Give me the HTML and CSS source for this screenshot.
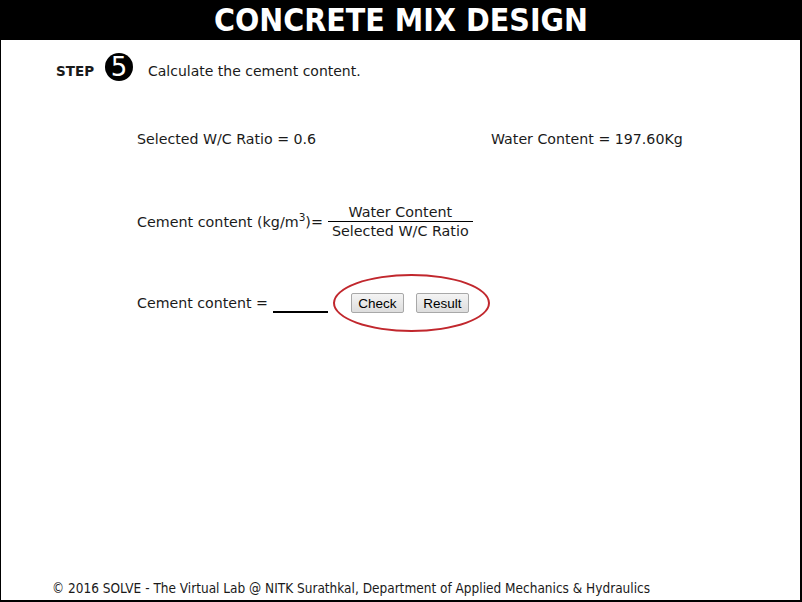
FILE: index.html
```html
<!DOCTYPE html>
<html>
<head>
<meta charset="utf-8">
<link rel="stylesheet" href="styles.css">
</head>
<body>
<div class="frame">
  <header class="title">CONCRETE MIX DESIGN</header>
  <main class="content">
    <div class="step">
      <span class="step-label">STEP</span>
      <span class="step-num">5</span>
      <span class="step-text">Calculate the cement content.</span>
    </div>
    <div class="given">
      <span class="ratio">Selected W/C Ratio = 0.6</span>
      <span class="water">Water Content = 197.60Kg</span>
    </div>
    <div class="formula">
      <span>Cement content (kg/m<sup>3</sup>)=</span>
      <span class="frac">
        <span class="num">Water Content</span>
        <span class="den">Selected W/C Ratio</span>
      </span>
    </div>
    <div class="answer">
      <span>Cement content =</span>
      <span class="blank"></span>
      <span class="btns">
        <button class="btn">Check</button>
        <button class="btn">Result</button>
      </span>
    </div>
  </main>
  <footer class="footer">© 2016 SOLVE - The Virtual Lab @ NITK Surathkal, Department of Applied Mechanics &amp; Hydraulics</footer>
</div>
</body>
</html>
```
FILE: styles.css
```css
html, body { margin: 0; padding: 0; background: #fff; }
body { width: 802px; height: 602px; overflow: hidden; }
.frame {
  box-sizing: border-box;
  width: 802px; height: 602px;
  border-left: 1px solid #000;
  border-right: 2px solid #000;
  border-bottom: 2px solid #000;
  display: flex; flex-direction: column;
  font-family: "DejaVu Sans", Verdana, sans-serif;
  color: #1a1a1a;
}
.title {
  background: #000; color: #fff;
  height: 40px; margin: 0 -2px 0 -1px;
  font-family: "DejaVu Sans Condensed", "DejaVu Sans", sans-serif;
  font-weight: bold; font-size: 31.8px; line-height: 40px;
  text-align: center;
}
.content { flex: 1; padding-left: 55px; }
.step { display: flex; align-items: center; margin-top: 12px; height: 30px; }
.step-label { font-weight: bold; font-size: 13.5px; width: 49px; margin-top: 8px; }
.step-num {
  width: 28px; height: 28px; border-radius: 50%; background: #000; color: #fff;
  display: flex; align-items: center; justify-content: center;
  font-size: 26px; line-height: 1; margin-right: 15px;
}
.step-text { font-size: 14px; margin-top: 8px; }
.given { display: flex; margin: 48px 0 0 81px; font-size: 14.2px; height: 18px; align-items: center; }
.given .ratio { width: 354px; }
.formula { display: flex; align-items: center; margin: 56px 0 0 81px; font-size: 14.3px; }
.formula sup { font-size: 10.5px; line-height: 0; }
.frac { display: inline-flex; flex-direction: column; align-items: center; margin-left: 5px; }
.frac .num { border-bottom: 1px solid #000; padding: 0 20px; line-height: 17px; align-self: stretch; text-align: center; }
.frac .den { line-height: 18px; padding: 0 4px; }
.answer { display: flex; align-items: center; margin: 34px 0 0 81px; font-size: 14.2px; height: 58px; }
.blank { width: 55px; border-bottom: 2px solid #000; margin: 17px 0 0 5px; }
.btns {
  display: flex; align-items: center; gap: 12px;
  margin-left: 5px; padding: 0 19px 0 16px; height: 54px;
  border: 2px solid #c1272d; border-radius: 50%;
}
.btn {
  font-family: "Liberation Sans", Arial, sans-serif; font-size: 13.5px;
  width: 53px; height: 20px; padding: 0; color: #000;
  background: linear-gradient(#f4f4f4, #dddddd);
  border: 1px solid #a8a8a8; border-radius: 2px;
}
.footer {
  font-family: "DejaVu Sans Condensed", "DejaVu Sans", sans-serif; font-size: 13.5px;
  padding: 0 0 4px 51px; color: #1a1a1a;
}
```
